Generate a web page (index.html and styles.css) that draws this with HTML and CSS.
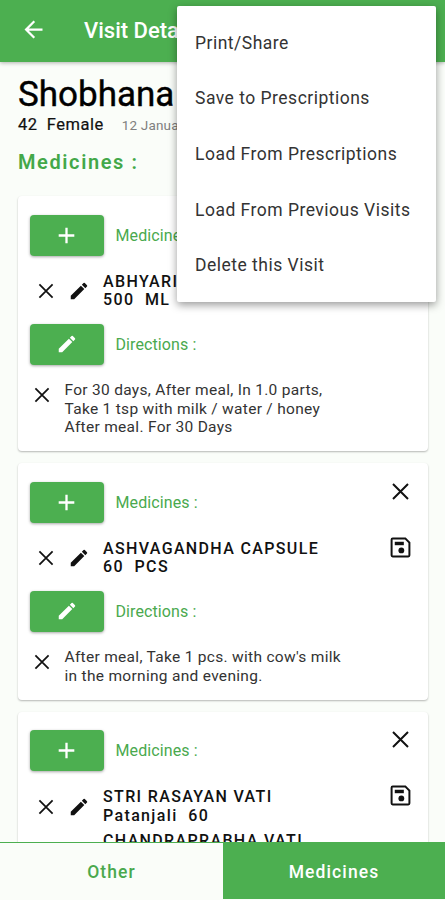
FILE: index.html
```html
<!DOCTYPE html>
<html lang="en">
<head>
<meta charset="utf-8">
<title>Visit Details</title>
<link rel="stylesheet" href="styles.css">
</head>
<body>
<svg class="defs" aria-hidden="true">
  <symbol id="back" viewBox="0 0 24 24"><path d="M20 11H7.8l5.6-5.6L12 4l-8 8 8 8 1.4-1.4L7.8 13H20z"/></symbol>
  <symbol id="plus" viewBox="0 0 24 24"><path d="M19.5 13.1h-6.4v6.4h-2.2v-6.4H4.5v-2.2h6.4V4.5h2.2v6.4h6.4z"/></symbol>
  <symbol id="close" viewBox="0 0 24 24"><path d="M4.8 4.8L19.2 19.2M19.2 4.8L4.8 19.2" fill="none" stroke="currentColor" stroke-width="1.9"/></symbol>
  <symbol id="pencil" viewBox="0 0 24 24"><path d="M3 17.25V21h3.75L17.8 9.94l-3.75-3.75zM20.7 7.04a1 1 0 0 0 0-1.41L18.37 3.3a1 1 0 0 0-1.41 0l-1.83 1.83 3.75 3.75z"/></symbol>
  <symbol id="save" viewBox="0 0 24 24"><path fill-rule="evenodd" d="M17 2.5H4.500a2 2 0 0 0-2 2v15a2 2 0 0 0 2 2h15a2 2 0 0 0 2-2V7zM19.600 19.600H4.400V4.400h11.900L19.600 7.700z"/><path d="M6.500 6.500h8.700v3.300H6.500z"/><circle cx="12.800" cy="14.800" r="2.800"/></symbol>
</svg>
<div class="app">
  <header class="bar">
    <svg class="back"><use href="#back"/></svg>
    <h1 class="bar-title">Visit Details</h1>
  </header>
  <main class="content">
    <h2 class="name">Shobhana</h2>
    <div class="meta"><span class="age">42&nbsp; Female</span><span class="date">12 January</span></div>
    <h3 class="section">Medicines :</h3>

    <section class="card">
      <div class="main">
        <div class="head"><button class="btn"><svg><use href="#plus"/></svg></button><span class="label">Medicines :</span></div>
        <div class="meds">
          <div class="med"><svg class="x"><use href="#close"/></svg><svg class="edit"><use href="#pencil"/></svg><p class="drug">ABHYARISHTA<br>500&nbsp; ML</p></div>
        </div>
        <div class="head"><button class="btn pen"><svg><use href="#pencil"/></svg></button><span class="label">Directions :</span></div>
        <div class="note"><svg class="x"><use href="#close"/></svg><p class="text">For 30 days, After meal, In 1.0 parts,<br>Take 1 tsp with milk / water / honey<br>After meal. For 30 Days</p></div>
      </div>
      <div class="side"><svg class="remove"><use href="#close"/></svg><svg class="save"><use href="#save"/></svg></div>
    </section>

    <section class="card">
      <div class="main">
        <div class="head"><button class="btn"><svg><use href="#plus"/></svg></button><span class="label">Medicines :</span></div>
        <div class="meds">
          <div class="med"><svg class="x"><use href="#close"/></svg><svg class="edit"><use href="#pencil"/></svg><p class="drug">ASHVAGANDHA CAPSULE<br>60&nbsp; PCS</p></div>
        </div>
        <div class="head"><button class="btn pen"><svg><use href="#pencil"/></svg></button><span class="label">Directions :</span></div>
        <div class="note"><svg class="x"><use href="#close"/></svg><p class="text">After meal, Take 1 pcs. with cow's milk<br>in the morning and evening.</p></div>
      </div>
      <div class="side"><svg class="remove"><use href="#close"/></svg><svg class="save"><use href="#save"/></svg></div>
    </section>

    <section class="card">
      <div class="main">
        <div class="head"><button class="btn"><svg><use href="#plus"/></svg></button><span class="label">Medicines :</span></div>
        <div class="meds">
          <div class="med"><svg class="x"><use href="#close"/></svg><svg class="edit"><use href="#pencil"/></svg><p class="drug">STRI RASAYAN VATI<br>Patanjali&nbsp; 60</p></div>
          <div class="med"><p class="drug only">CHANDRAPRABHA VATI</p></div>
        </div>
      </div>
      <div class="side"><svg class="remove"><use href="#close"/></svg><svg class="save"><use href="#save"/></svg></div>
    </section>
  </main>
  <nav class="tabs"><a class="tab">Other</a><a class="tab active">Medicines</a></nav>
  <div class="menu">
    <a class="item">Print/Share</a>
    <a class="item">Save to Prescriptions</a>
    <a class="item">Load From Prescriptions</a>
    <a class="item">Load From Previous Visits</a>
    <a class="item">Delete this Visit</a>
  </div>
</div>
</body>
</html>
```
FILE: styles.css
```css
* { box-sizing: border-box; }
body { margin: 0; font-family: Roboto, "Liberation Sans", sans-serif; color: #111; }
h1, h2, h3, p { margin: 0; }
svg { display: block; flex: none; fill: currentColor; }
.defs { position: absolute; width: 0; height: 0; }

.app { position: relative; display: flex; flex-direction: column; height: 900px; overflow: hidden; background: #fafdf9; }
.bar { flex: none; display: flex; align-items: center; height: 62px; padding: 0 20px; background: #4caf50; color: #fff; box-shadow: 0 1px 4px rgba(0,0,0,.3); z-index: 1; }
.back { width: 27px; height: 27px; margin-top: -3px; }
.bar-title { margin: -2px 0 0 37px; font-size: 22px; font-weight: 500; white-space: nowrap; }

.content { flex: 1; min-height: 0; overflow: hidden; padding: 13px 17px 0 18px; }
.name { font-size: 35px; line-height: 40px; font-weight: 400; color: #000; -webkit-text-stroke: .4px; }
.meta { display: flex; align-items: baseline; line-height: 20px; white-space: nowrap; }
.age { font-size: 16.5px; letter-spacing: .5px; -webkit-text-stroke: .2px; }
.date { margin-left: 18px; font-size: 13.5px; letter-spacing: .2px; color: #808080; }
.section { margin: 15px 0 22px; font-size: 20px; line-height: 24px; font-weight: 600; letter-spacing: 1.6px; color: #43a849; }

.card { display: flex; justify-content: space-between; margin-bottom: 12px; padding: 18.5px 15.5px 14.5px 11.5px; background: #fff; border-radius: 4px; box-shadow: 0 1px 2px rgba(0,0,0,.28); }
.head { display: flex; align-items: center; gap: 12px; height: 41.5px; }
.btn { display: grid; place-items: center; width: 74px; height: 41px; padding: 0; border: 0; border-radius: 4px; background: #4caf50; color: #fff; box-shadow: 0 1px 3px rgba(0,0,0,.35); }
.btn svg { width: 25px; height: 25px; }
.pen svg { width: 22px; height: 22px; }
.label { font-size: 16px; letter-spacing: .1px; color: #4aa94e; white-space: nowrap; }
.meds { display: flex; flex-direction: column; gap: 7px; padding: 16.5px 0 14px; }
.med { display: flex; align-items: center; padding-left: 5px; }
.x { width: 22px; height: 22px; }
.edit { width: 22px; height: 22px; margin-left: 11px; }
.drug { margin-left: 13.5px; font-size: 16px; line-height: 18.5px; font-weight: 500; letter-spacing: 1.35px; white-space: nowrap; }
.only { margin-left: 68.5px; }
.note { display: flex; padding: 16px 0 0 1.5px; }
.note .x { margin-top: 3px; }
.text { margin-left: 11.5px; font-size: 15.5px; line-height: 18.5px; letter-spacing: .3px; color: #333; white-space: nowrap; }
.side { display: flex; flex-direction: column; gap: 31px; align-items: center; margin-top: -3px; }
.remove, .save { width: 25px; height: 25px; }

.tabs { flex: none; display: grid; grid-template-columns: 223px 1fr; height: 58px; padding-bottom: 1px; border-top: 1px solid #4caf50; z-index: 1; }
.tab { display: grid; place-items: center; padding-top: 1px; font-size: 17.5px; font-weight: 500; letter-spacing: 1.1px; color: #4aa94e; }
.active { background: #4caf50; color: #fff; }

.menu { position: absolute; z-index: 2; left: 177px; top: 6px; width: 259px; height: 296px; padding: 9px 18px; border-radius: 2px; background: #fff; box-shadow: 0 3px 8px rgba(0,0,0,.4); }
.item { display: flex; align-items: center; height: 55.6px; font-size: 17.5px; letter-spacing: .49px; color: #333; white-space: nowrap; }
```
